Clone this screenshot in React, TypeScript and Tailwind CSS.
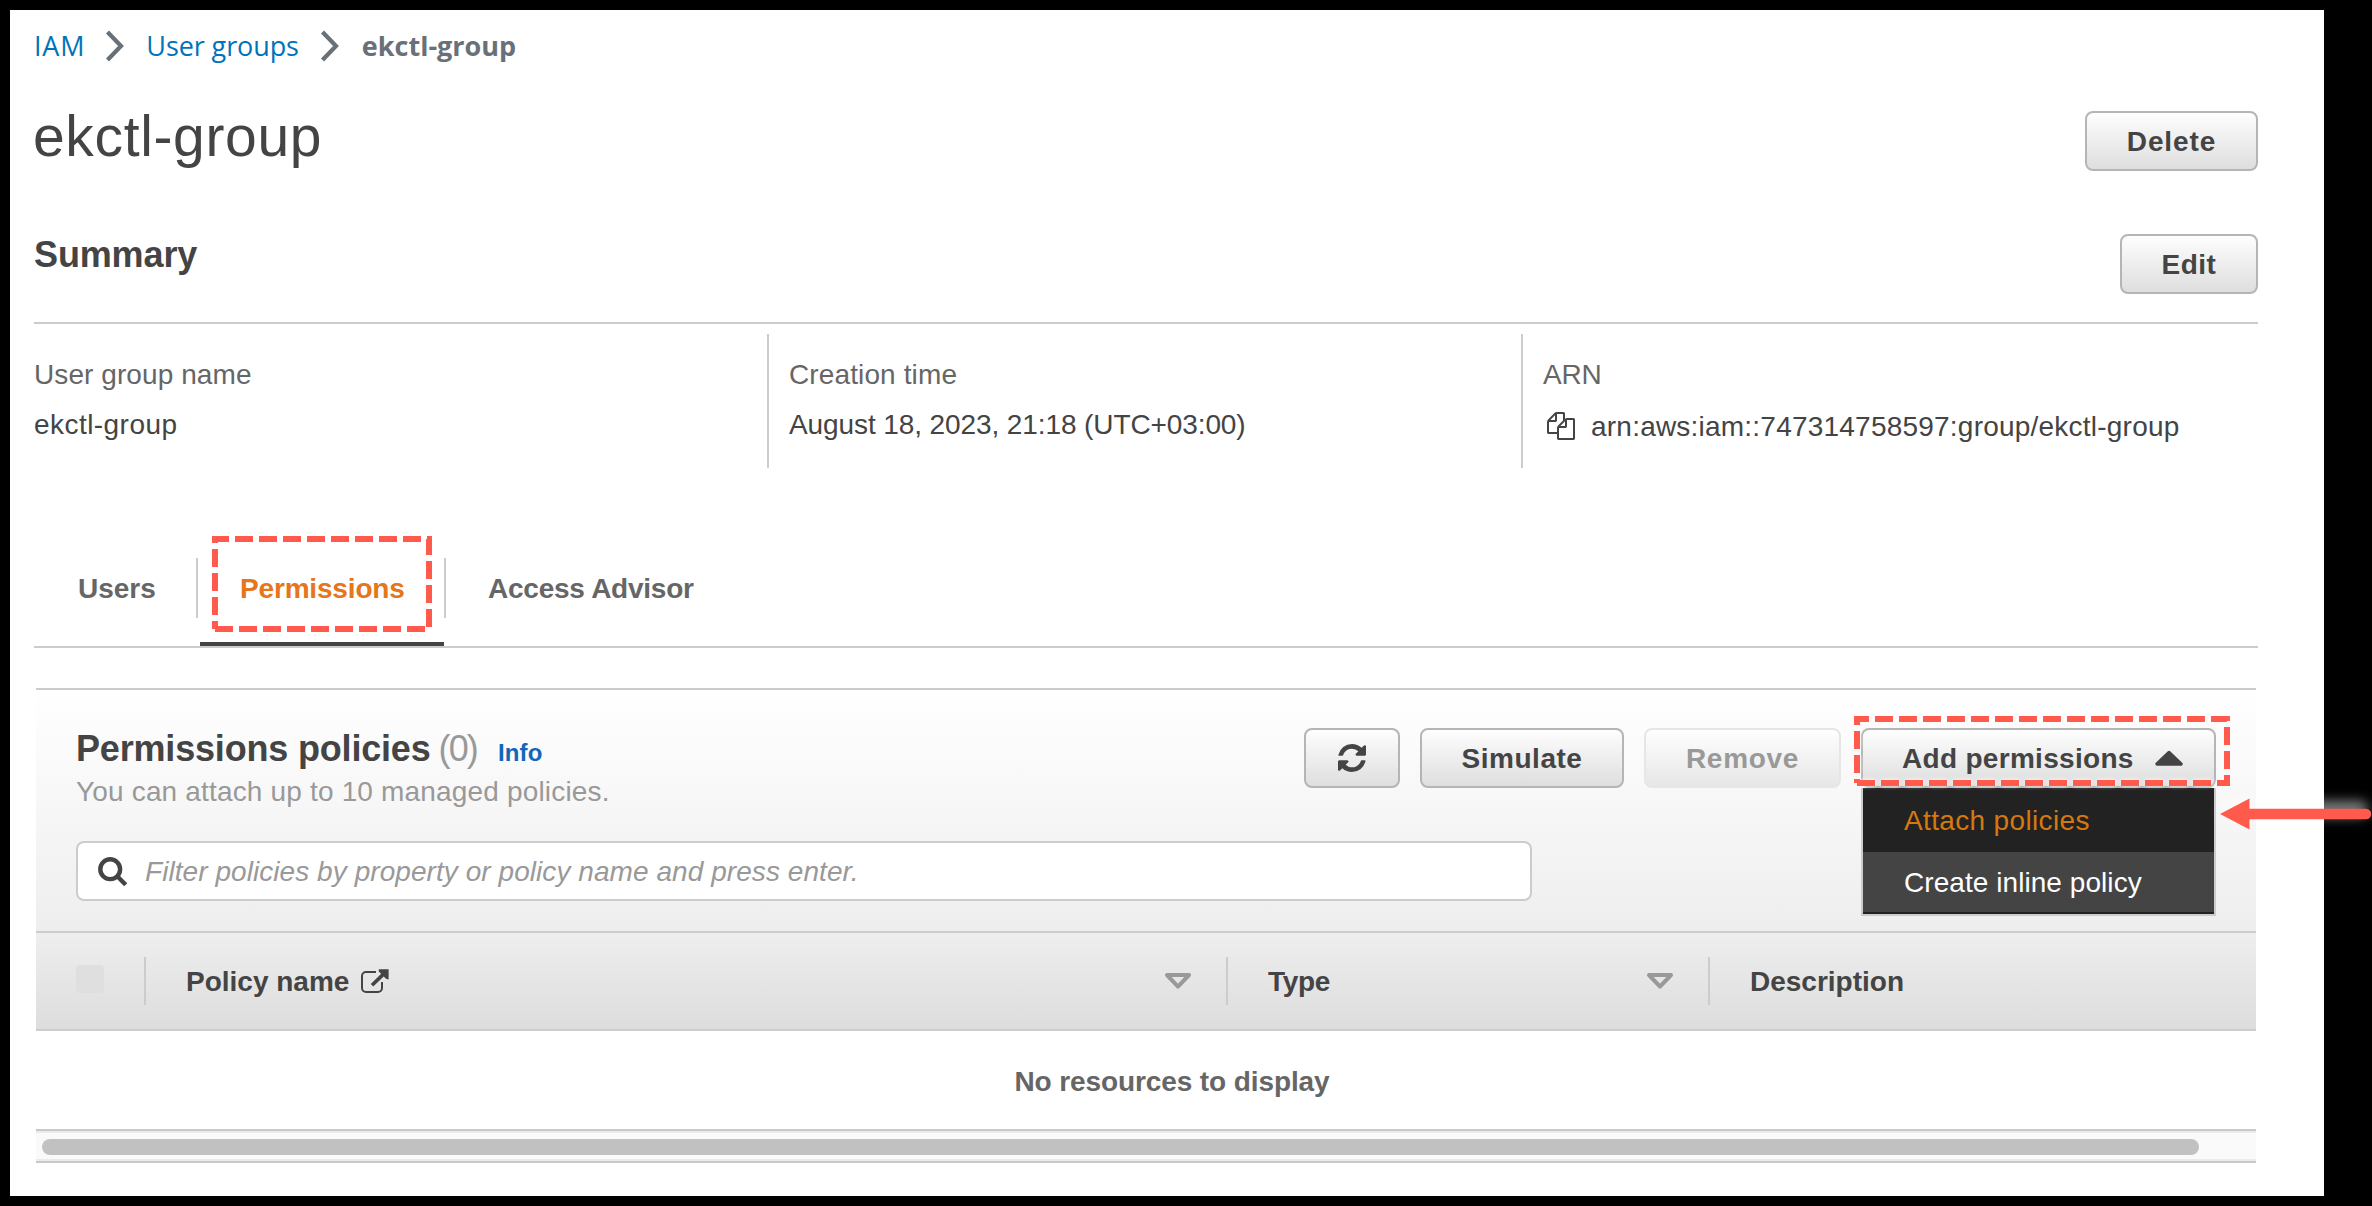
import type { ReactNode } from "react";

function Button({ className = "", disabled = false, children }: { className?: string; disabled?: boolean; children: ReactNode }) {
  const tone = disabled
    ? "border-[#e6e6e6] from-white to-[#e6e6e6] text-[#999]"
    : "border-[#b5b5b5] from-white to-[#ddd] text-[#444]";
  return (
    <button className={`flex h-[60px] items-start rounded-lg border-2 bg-linear-to-b bg-origin-border pt-[13px] text-[28px] leading-[31px] font-bold ${tone} ${className}`}>
      {children}
    </button>
  );
}

function Chevron({ className = "" }: { className?: string }) {
  return (
    <svg width="20" height="32" viewBox="0 0 20 32" fill="none" stroke="#687078" strokeWidth="4.2" className={className}>
      <path d="M2.5 2 16 16 2.5 30" />
    </svg>
  );
}

function CopyIcon() {
  return (
    <svg width="28" height="28" viewBox="0 0 1792 1792" fill="#444" className="mt-px">
      <path d="M1696 384q40 0 68 28t28 68v1216q0 40-28 68t-68 28h-960q-40 0-68-28t-28-68v-288h-544q-40 0-68-28t-28-68v-672q0-40 20-88t48-76l408-408q28-28 76-48t88-20h416q40 0 68 28t28 68v328q68-40 128-40h416zm-544 213l-299 299h299v-299zm-640-384l-299 299h299v-299zm196 647l316-316v-416h-384v416q0 40-28 68t-68 28h-416v640h512v-256q0-40 20-88t48-76zm956 804v-1152h-384v416q0 40-28 68t-68 28h-416v640h896z" />
    </svg>
  );
}

function RefreshIcon() {
  return (
    <svg width="28" height="28" viewBox="128 128 1536 1536" fill="#444" className="mt-px">
      <path d="M1639 1056q0 5-1 7-64 268-268 434.5t-478 166.5q-146 0-282.5-55t-243.5-157l-129 129q-19 19-45 19t-45-19-19-45v-448q0-26 19-45t45-19h448q26 0 45 19t19 45-19 45l-137 137q71 66 161 102t187 36q134 0 250-65t186-179q11-17 53-117 8-23 30-23h192q13 0 22.5 9.5t9.5 22.5zm25-800v448q0 26-19 45t-45 19h-448q-26 0-45-19t-19-45 19-45l138-138q-148-137-349-137-134 0-250 65t-186 179q-11 17-53 117-8 23-30 23h-199q-13 0-22.5-9.5t-9.5-22.5v-7q65-268 270-434.5t480-166.5q146 0 284 55.5t245 156.5l130-129q19-19 45-19t45 19 19 45z" />
    </svg>
  );
}

function SearchIcon() {
  return (
    <svg width="30" height="30" viewBox="0 0 30 30" fill="none" stroke="#444" strokeWidth="4.4">
      <circle cx="12.2" cy="12.2" r="9.9" />
      <path d="M18.5 18.5 27.7 27.7" />
    </svg>
  );
}

function ExternalIcon({ className = "" }: { className?: string }) {
  return (
    <svg width="29" height="25" viewBox="0 0 29 25" fill="none" stroke="#444" strokeWidth="2" className={className}>
      <path d="M16 3H6a4 4 0 0 0-4 4v12a4 4 0 0 0 4 4h12a4 4 0 0 0 4-4v-6" />
      <path d="M12 16.2 24 4.6" strokeWidth="3.6" />
      <path d="M18.8 0.2H28.6V10.6L26 9.8 18.8 2.6Z" fill="#444" stroke="none" />
    </svg>
  );
}

function SortIcon({ className = "" }: { className?: string }) {
  return (
    <svg width="28" height="17" viewBox="0 0 28 17" fill="none" stroke="#999" strokeWidth="4" strokeLinejoin="round" className={className}>
      <path d="M3 2H25L14 13.6Z" />
    </svg>
  );
}

/* Dashed frame drawn counter-clockwise from its bottom-left corner. */
function Highlight({ width, height, className }: { width: number; height: number; className: string }) {
  return (
    <svg
      width={width}
      height={height}
      fill="none"
      stroke="#ff5a4c"
      strokeWidth="6"
      strokeDasharray="18 6"
      className={`pointer-events-none absolute drop-shadow-[0_0_2px_rgba(255,255,255,0.9)] ${className}`}
    >
      <path d={`M3 ${height - 3}H${width - 3}V3H3V${height - 3}`} />
    </svg>
  );
}

function HeaderDivider() {
  return <div className="mt-6 h-12 w-0.5 shrink-0 bg-[#ccc]" />;
}

export default function App() {
  return (
    <div className="relative h-[1206px] w-[2372px] overflow-hidden bg-black p-[10px] font-['Liberation_Sans',Arial,sans-serif] text-[28px] leading-[31px] text-[#444]">
      <div className="h-[1186px] w-[2314px] bg-white pt-[17px] pr-[66px] pl-6">
        <nav className="flex h-[37px] font-['Open_Sans',sans-serif] text-[27px] leading-[37px] text-[#0073bb]">
          <a className="tracking-[0.8px]">IAM</a>
          <Chevron className="mt-[3px] ml-5" />
          <a className="ml-[21px] tracking-[-0.1px]">User groups</a>
          <Chevron className="mt-[3px] ml-[21px]" />
          <span className="ml-[22px] font-bold text-[#687078]">ekctl-group</span>
        </nav>

        <div className="mt-[41px] flex h-[66px] justify-between">
          <h1 className="-ml-px text-[57px] leading-[63px] tracking-[0.65px]">ekctl-group</h1>
          <Button className="w-[173px] justify-center self-end tracking-[0.9px]">Delete</Button>
        </div>

        <div className="mt-[63px] flex h-[60px] justify-between">
          <h2 className="text-[36px] leading-[41px] font-bold tracking-[-0.13px]">Summary</h2>
          <Button className="w-[138px] justify-center tracking-[0.48px]">Edit</Button>
        </div>

        <div className="mt-7 h-0.5 bg-[#ccc]" />

        <dl className="mt-2.5 flex h-[134px]">
          <div className="w-[733px] pt-[25px]">
            <dt className="tracking-[0.08px] text-[#666]">User group name</dt>
            <dd className="mt-[19px] tracking-[0.45px]">ekctl-group</dd>
          </div>
          <div className="w-[754px] border-l-2 border-[#ccc] pt-[25px] pl-5">
            <dt className="tracking-[0.12px] text-[#666]">Creation time</dt>
            <dd className="mt-[19px] tracking-[-0.1px]">August 18, 2023, 21:18 (UTC+03:00)</dd>
          </div>
          <div className="flex-1 border-l-2 border-[#ccc] pt-[25px] pl-5">
            <dt className="tracking-[-0.15px] text-[#666]">ARN</dt>
            <dd className="mt-[21px] flex pl-1">
              <CopyIcon />
              <span className="ml-4 tracking-[0.22px]">arn:aws:iam::747314758597:group/ekctl-group</span>
            </dd>
          </div>
        </dl>

        <div className="mt-[90px] flex h-[90px] border-b-2 border-[#ccc] font-bold text-[#666]">
          <div className="h-[60px] w-[164px] border-r-2 border-[#ccc] pt-[15px] pl-11">Users</div>
          <div className="relative h-[60px] w-[248px] border-r-2 border-[#ccc] pt-[15px] pl-[42px] tracking-[-0.17px] text-[#e5761c]">
            Permissions
            <div className="absolute top-[84px] left-0.5 h-1 w-[244px] bg-[#444]" />
            <Highlight width={220} height={96} className="top-[-22px] left-[14px]" />
          </div>
          <div className="pt-[15px] pl-[42px] tracking-[-0.24px]">Access Advisor</div>
        </div>

        <section className="mt-10 ml-0.5 w-[2220px]">
          <div className="h-[245px] border-y-2 border-[#ccc] bg-linear-to-b from-white to-[#eee] px-10 pt-[38px]">
            <div className="flex h-[79px] justify-between">
              <div>
                <div className="flex h-[41px] items-baseline leading-[41px]">
                  <h2 className="text-[36px] font-bold tracking-[-0.18px]">Permissions policies</h2>
                  <span className="ml-2 text-[36px] tracking-[-1.9px] text-[#999]">(0)</span>
                  <a className="ml-[21px] text-[24px] font-bold tracking-[0.16px] text-[#1166bb]">Info</a>
                </div>
                <p className="mt-[7px] tracking-[0.17px] text-[#999]">You can attach up to 10 managed policies.</p>
              </div>
              <div className="flex gap-5">
                <Button className="w-24 justify-center"><RefreshIcon /></Button>
                <Button className="w-[204px] justify-center tracking-[0.52px]">Simulate</Button>
                <Button disabled className="w-[197px] justify-center tracking-[0.69px]">Remove</Button>
                <div className="relative w-[355px]">
                  <Button className="w-full pl-[39px] tracking-[0.3px]">
                    Add permissions
                    <svg width="30" height="17" viewBox="0 0 30 17" className="mt-[7px] ml-5">
                      <path d="M15 2.5 27 14H3Z" fill="#444" stroke="#444" strokeWidth="3.4" strokeLinejoin="round" />
                    </svg>
                  </Button>
                  <ul className="absolute top-[60px] left-0 h-32 w-[355px] border-2 border-t-0 border-[#ccc] bg-[#222]">
                    <li className="h-16 pt-[17px] pl-[41px] tracking-[0.35px] text-[#d5790f]">Attach policies</li>
                    <li className="h-[60px] bg-[#444] pt-[15px] pl-[41px] tracking-[0.06px] text-white">Create inline policy</li>
                  </ul>
                  <Highlight width={376} height={70} className="-top-3 -left-[7px]" />
                </div>
              </div>
            </div>
            <div className="mt-[34px] flex h-[60px] w-[1456px] rounded-lg border-2 border-[#ccc] bg-white pt-[14px] pl-5">
              <SearchIcon />
              <span className="mt-[-1px] ml-[17px] tracking-[0.06px] text-[#999] italic">Filter policies by property or policy name and press enter.</span>
            </div>
          </div>

          <div className="flex h-[98px] border-b-2 border-[#ccc] bg-linear-to-b from-[#eee] to-[#ddd] font-bold">
            <div className="w-[108px] pt-8 pl-10">
              <div className="size-7 rounded bg-[#dfdfdf]" />
            </div>
            <HeaderDivider />
            <div className="flex w-[1080px] items-start pl-10">
              <span className="pt-[33px]">Policy name</span>
              <ExternalIcon className="mt-9 ml-[11px]" />
              <SortIcon className="mt-10 mr-[34px] ml-auto" />
            </div>
            <HeaderDivider />
            <div className="flex w-[480px] items-start pl-10">
              <span className="pt-[33px] tracking-[-0.33px]">Type</span>
              <SortIcon className="mt-10 mr-[34px] ml-auto" />
            </div>
            <HeaderDivider />
            <span className="pt-[33px] pl-10">Description</span>
          </div>

          <p className="h-[98px] pt-[35px] pl-[52px] text-center font-bold tracking-[-0.1px] text-[#666]">No resources to display</p>

          <div className="h-[34px] border-y-2 border-[#c8c8c8]">
            <div className="h-[30px] border-y-2 border-[#ebebeb] bg-[#fafafa] pt-1.5 pl-1.5">
              <div className="h-4 w-[2157px] rounded-full bg-[#c1c1c1]" />
            </div>
          </div>
        </section>
      </div>

      <svg width="192" height="80" viewBox="0 0 192 80" className="absolute top-[774px] left-[2180px]">
        <defs>
          <filter id="glow" filterUnits="userSpaceOnUse" x="0" y="0" width="192" height="80">
            <feGaussianBlur stdDeviation="6" />
          </filter>
        </defs>
        <path d="M50 35H180" stroke="#fff" strokeOpacity="0.5" strokeWidth="16" strokeLinecap="round" filter="url(#glow)" />
        <path d="M66 40H186" stroke="#ff5a4c" strokeWidth="10.5" strokeLinecap="round" />
        <path d="M40 40 69.5 24.5V55.5Z" fill="#ff5a4c" />
      </svg>
    </div>
  );
}
